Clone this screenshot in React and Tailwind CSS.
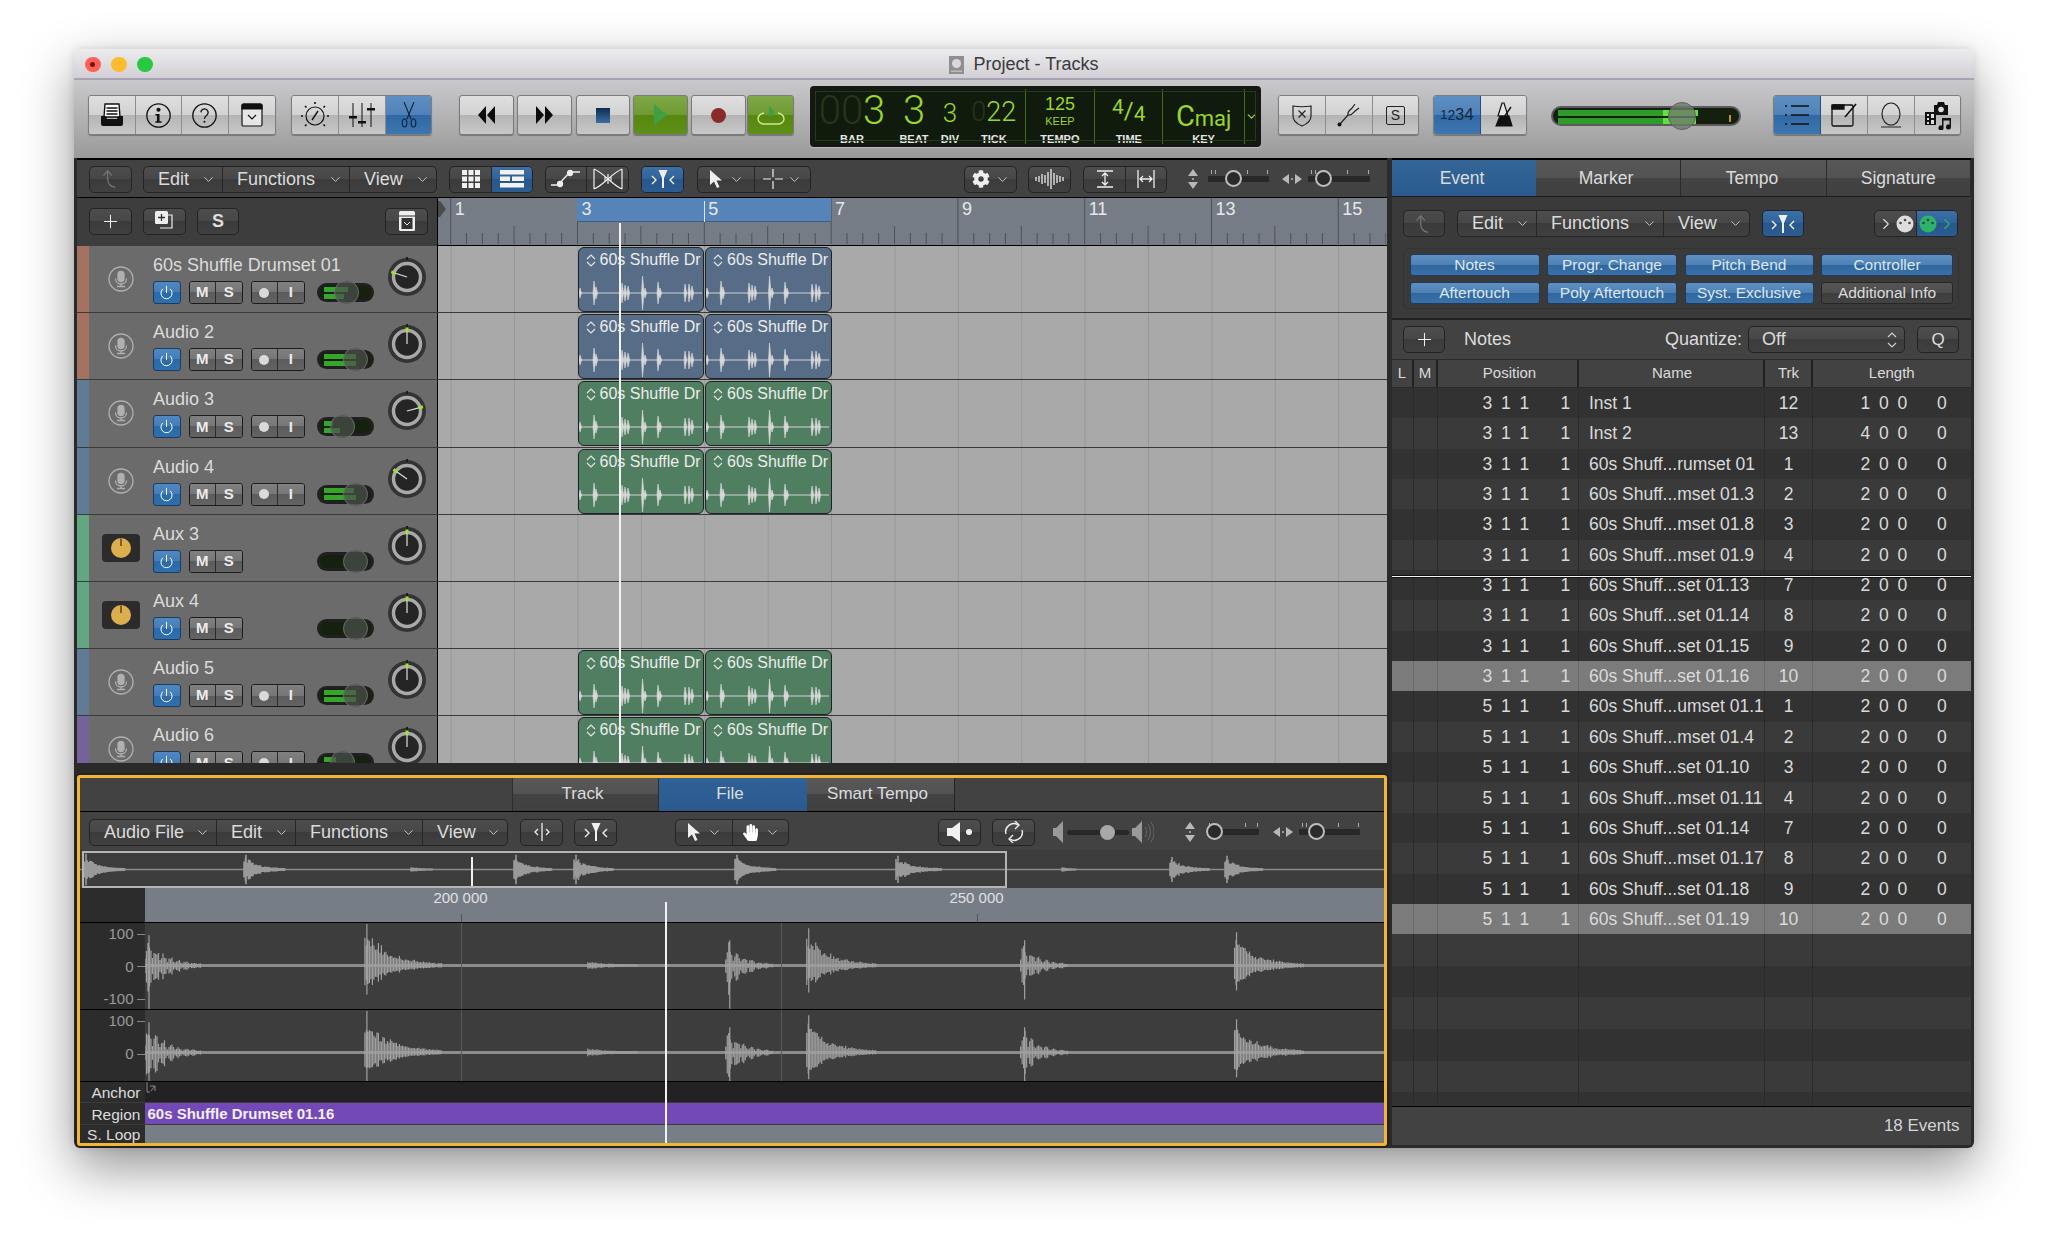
import React from 'react';
import { ChevronDown, Plus, Power } from 'lucide-react';
import { FaCog, FaHandPaper } from 'react-icons/fa';

const lightBtn = 'flex h-full items-center justify-center border-r border-[#8d8d8d] last:border-r-0 bg-[linear-gradient(#dfdfdf,#d2d2d2_50%,#b4b4b4_50%,#c8c8c8)]';
const blueBtn = 'flex h-full items-center justify-center border-r border-[#234f7d] last:border-r-0 bg-[linear-gradient(#5f8fc2,#4f82b8_50%,#2f68a4_50%,#3d76b0)]';
const darkSeg = 'flex h-[27px] overflow-hidden rounded-[5px] border border-[#232323] bg-[linear-gradient(#4d4d4d,#474747_50%,#3b3b3b_50%,#404040)] text-[#dcdcdc]';
const darkCell = 'flex h-full items-center justify-center border-r border-[#262626] last:border-r-0';
const activeCell = 'flex h-full items-center justify-center border-r border-[#262626] last:border-r-0 bg-[linear-gradient(#3d70a8,#2f6299_50%,#28578d_50%,#2b5c92)]';

function rng(seed) {
  let s = seed;
  return () => (s = (s * 16807) % 2147483647) / 2147483647;
}

function burst(x0, len, up, down, cy, seed, osc) {
  const r = rng(seed);
  let d = '';
  for (let i = 0; i < len; i += 1.5) {
    const env = Math.exp((-3.2 * i) / len);
    const wob = osc ? 0.3 + 0.7 * Math.abs(Math.sin(i * osc)) : 0.75 + 0.25 * r();
    const k = env * wob * (0.55 + 0.45 * r());
    d += `M${(x0 + i).toFixed(1)} ${(cy - up * k - 1).toFixed(1)}V${(cy + down * k + 1).toFixed(1)}`;
  }
  // the attack of each hit sticks out past the rest
  if (up > 10) {
    const sx = x0 + (osc ? 4 : 2);
    d += `M${sx} ${(cy - up * (osc ? 0.85 : 1.05)).toFixed(1)}V${(cy + down * (osc ? 1.15 : 1.05)).toFixed(1)}`;
  }
  return d;
}

const overviewBursts = [[4, 42, 15], [164, 42, 14], [331, 22, 2], [434, 38, 14], [494, 40, 14], [655, 42, 14], [816, 46, 13], [982, 14, 2], [1090, 40, 12], [1145, 38, 13]];
const bigBursts = [[0, 56, 36, 42, 0.42], [220, 78, 40, 28, 0], [443, 50, 4, 4, 0], [581, 48, 30, 38, 0.42], [662, 70, 36, 26, 0], [876, 48, 30, 30, 0.42], [1090, 70, 32, 24, 0]];

function Overview() {
  return (
    <svg className="absolute inset-0 h-full w-full" viewBox="0 0 1304 38" preserveAspectRatio="none">
      <path d="M0 19.5H1304" stroke="#8a8a8a" strokeWidth="1.5" />
      {overviewBursts.map(([x, l, a], i) => (
        <path key={i} d={burst(x, l, a, a, 19.5, 77 + i, 0)} stroke="#999" strokeWidth="1.6" fill="none" />
      ))}
    </svg>
  );
}

function BigWave({ cy, seed, h }) {
  return (
    <svg className="absolute inset-0 h-full w-full" viewBox={`0 0 1240 ${h}`} preserveAspectRatio="none">
      <path d={`M0 ${cy}H1240`} stroke="#8c8c8c" strokeWidth="3" />
      {bigBursts.map(([x, l, u, dn, o], i) => (
        <path key={i} d={burst(x, l, u, dn, cy, seed + i * 13, o)} stroke="#a0a0a0" strokeWidth="1.2" fill="none" />
      ))}
    </svg>
  );
}

function RegionWave() {
  const spikes = [[1, 5], [15, 12], [17, 6], [43, 10], [46, 8], [49, 7], [63.5, 17], [66, 5], [79, 11], [81, 5], [106, 9], [110, 9], [113, 7]];
  return (
    <svg width="125" height="40" viewBox="0 0 125 40" className="mt-[1px]">
      <path d="M0 20H123" stroke="#d4d4d4" strokeWidth="1" />
      {spikes.map(([x, a], i) => (
        <path key={i} d={`M${x} ${20 - a}L${x + 1.6} 20L${x} ${20 + a}L${x - 1} 20Z`} fill="#d8d8d8" stroke="#d8d8d8" strokeWidth="0.6" />
      ))}
    </svg>
  );
}

function Diamond() {
  return (
    <svg width="10" height="13" viewBox="0 0 10 13" fill="none" stroke="#e4e4e4" strokeWidth="1.2">
      <path d="M1 5L5 1L9 5M1 8L5 12L9 8" />
    </svg>
  );
}

function Region({ color }) {
  return (
    <div className={`h-[65px] w-[126.5px] shrink-0 overflow-hidden rounded-[6px] border border-[#1d2426] ${color}`}>
      <div className="flex h-[24px] items-center gap-[4px] pl-[7px] text-[16px] leading-none whitespace-nowrap text-[#ececec]">
        <Diamond />
        <span>60s Shuffle Dr</span>
      </div>
      <RegionWave />
    </div>
  );
}

function Mic() {
  return (
    <svg width="26" height="26" viewBox="0 0 26 26" fill="none" stroke="#b0b0b0" strokeWidth="1.3">
      <circle cx="13" cy="13" r="12" />
      <rect x="10" y="5.5" width="6" height="10" rx="3" fill="#b0b0b0" />
      <path d="M7.5 12.5c0 3.5 2.5 5.5 5.5 5.5s5.5-2 5.5-5.5M13 18v2.5M9 20.5h8" />
    </svg>
  );
}

function AuxKnob() {
  return (
    <div className="flex h-[28px] w-[38px] items-center justify-center rounded-[4px] bg-[#2b2b2b]">
      <svg width="22" height="22" viewBox="0 0 22 22">
        <circle cx="11" cy="11" r="10" fill="#dcae4e" />
        <path d="M11 1.5V9" stroke="#3a2c10" strokeWidth="1.2" />
      </svg>
    </div>
  );
}

function Knob({ angle }) {
  return (
    <svg width="40" height="40" viewBox="0 0 40 40">
      <circle cx="20" cy="20" r="19" fill="#333" />
      <path d="M20 0V3" stroke="#1c1c1c" strokeWidth="2" />
      <circle cx="20" cy="20" r="13.5" fill="#252525" stroke="#a9a9a9" strokeWidth="3.4" />
      <g transform={`rotate(${angle} 20 20)`}>
        <path d="M20 20V7" stroke="#e0e0e0" strokeWidth="1.2" />
        <path d="M20 3.5V7.5" stroke="#9be822" strokeWidth="3" />
      </g>
    </svg>
  );
}

function Fader({ pos, top, bot }) {
  return (
    <div className="relative ml-[12.5px] h-[19px] w-[57px] rounded-full bg-[#202020] p-[3px]">
      <div className="flex h-full flex-col justify-center gap-[2px] rounded-full bg-[#15210f] pl-[4px]">
        {top > 0 && <div className="h-[5px] bg-[#35a52c]" style={{ width: top }} />}
        {bot > 0 && <div className="h-[5px] bg-[#35a52c]" style={{ width: bot }} />}
      </div>
      <div className="absolute top-[-3px] h-[25px] w-[25px] rounded-full border border-[#6c6c6c] bg-[#4d524d]/70" style={{ left: pos }} />
    </div>
  );
}

const smallBtn = 'flex h-full items-center justify-center text-[15px] font-bold text-[#ececec] border-r border-[#2c2c2c] last:border-r-0 bg-[linear-gradient(#808080,#767676_50%,#5c5c5c_50%,#636363)]';

function TrackRow({ t }) {
  return (
    <div className="flex h-[67.2px] shrink-0 border-b border-[#3a3a3a]">
      <div className={`w-[12px] shrink-0 ${t.color}`} />
      <div className="flex w-[349px] shrink-0 border-r border-black bg-[#6b6b6b]">
        <div className="flex w-[64px] shrink-0 items-center justify-center">
          {t.aux ? <AuxKnob /> : <Mic />}
        </div>
        <div className="w-[221px] shrink-0 pt-[9px]">
          <div className="h-[21px] text-[18px] leading-[21px] text-[#dcdcdc]">{t.name}</div>
          <div className="mt-[5px] flex h-[23px] items-center">
            <div className="flex h-[23px] w-[27.5px] items-center justify-center rounded-[3px] border border-[#1d3c5c] bg-[linear-gradient(#4f88c2,#437cb6_50%,#2a6aa8_50%,#2f6fad)]">
              <Power size={15} color="#fff" strokeWidth={1.6} />
            </div>
            <div className="ml-[8px] flex h-[23px] w-[54px] overflow-hidden rounded-[3px] border border-[#1c1c1c]">
              <div className={`${smallBtn} w-[26.5px]`}>M</div>
              <div className={`${smallBtn} flex-1`}>S</div>
            </div>
            {t.aux ? (
              <div className="w-[62px]" />
            ) : (
              <div className="ml-[8px] flex h-[23px] w-[54px] overflow-hidden rounded-[3px] border border-[#1c1c1c]">
                <div className={`${smallBtn} w-[26.5px]`}><span className="h-[10px] w-[10px] rounded-full bg-[#dadada]" /></div>
                <div className={`${smallBtn} flex-1`}>I</div>
              </div>
            )}
            <Fader pos={t.pos} top={t.top} bot={t.bot} />
          </div>
        </div>
        <div className="ml-[13px] mt-[11px] h-[40px] w-[40px] shrink-0">
          <Knob angle={t.pan} />
        </div>
      </div>
      <div className="flex flex-1 gap-[1px] bg-[#a9a9a9] bg-[linear-gradient(to_right,#979797_1px,transparent_1px)] bg-[size:63.4px_100%] bg-[position:12.7px_0] pl-[139.5px] pt-[1px]">
        {t.clip && <Region color={t.clip} />}
        {t.clip && <Region color={t.clip} />}
      </div>
    </div>
  );
}

const blue = 'bg-[#566c87]';
const green = 'bg-[#4f7f60]';
const tracks = [
  { name: '60s Shuffle Drumset 01', color: 'bg-[#a57161]', clip: blue, pos: 17, top: 24, bot: 20, pan: -72 },
  { name: 'Audio 2', color: 'bg-[#a57161]', clip: blue, pos: 26, top: 32, bot: 32, pan: 0 },
  { name: 'Audio 3', color: 'bg-[#5f7b96]', clip: green, pos: 13, top: 9, bot: 16, pan: 75 },
  { name: 'Audio 4', color: 'bg-[#5f7b96]', clip: green, pos: 26, top: 30, bot: 32, pan: -55 },
  { name: 'Aux 3', color: 'bg-[#62a682]', aux: true, pos: 26, top: 0, bot: 0, pan: 0 },
  { name: 'Aux 4', color: 'bg-[#62a682]', aux: true, pos: 26, top: 0, bot: 0, pan: 0 },
  { name: 'Audio 5', color: 'bg-[#5f7b96]', clip: green, pos: 26, top: 32, bot: 32, pan: 0 },
  { name: 'Audio 6', color: 'bg-[#75629a]', clip: green, pos: 13, top: 12, bot: 14, pan: 0 },
];

const ev = (p, name, trk, len = 2, sel = false) => ({ p, name, trk, len, sel });
const events = [
  ev(3, 'Inst 1', 12, 1), ev(3, 'Inst 2', 13, 4), ev(3, '60s Shuff...rumset 01', 1), ev(3, '60s Shuff...mset 01.3', 2),
  ev(3, '60s Shuff...mset 01.8', 3), ev(3, '60s Shuff...mset 01.9', 4), ev(3, '60s Shuff...set 01.13', 7), ev(3, '60s Shuff...set 01.14', 8),
  ev(3, '60s Shuff...set 01.15', 9), ev(3, '60s Shuff...set 01.16', 10, 2, true), ev(5, '60s Shuff...umset 01.1', 1), ev(5, '60s Shuff...mset 01.4', 2),
  ev(5, '60s Shuff...set 01.10', 3), ev(5, '60s Shuff...mset 01.11', 4), ev(5, '60s Shuff...set 01.14', 7), ev(5, '60s Shuff...mset 01.17', 8),
  ev(5, '60s Shuff...set 01.18', 9), ev(5, '60s Shuff...set 01.19', 10, 2, true),
];

const colGrid = 'grid grid-cols-[22px_24px_141px_186px_48px_157.5px]';

function Num({ v, className = '' }) {
  return <span className={`w-[18.5px] text-center ${className}`}>{v}</span>;
}

function EventRow({ e, i }) {
  const bg = e.sel ? 'bg-[#7b7b7b]' : i % 2 ? 'bg-[#3a3a3a]' : 'bg-[#323232]';
  const cell = `h-full flex items-center border-r ${e.sel ? 'border-[#6a6a6a]' : 'border-[#2a2a2a]'}`;
  return (
    <div className={`${colGrid} h-[30.35px] text-[17.5px] text-[#dadada] ${bg}`}>
      <div className={cell} />
      <div className={cell} />
      <div className={`${cell} pl-[40px]`}>
        <Num v={e.p} /><Num v={1} /><Num v={1} /><Num v={1} className="ml-[22.5px]" />
      </div>
      <div className={`${cell} pl-[10px] whitespace-nowrap`}>{e.name}</div>
      <div className={`${cell} justify-center`}>{e.trk}</div>
      <div className="flex h-full items-center pl-[43px]">
        <Num v={e.len} /><Num v={0} /><Num v={0} /><Num v={0} className="ml-[21px]" />
      </div>
    </div>
  );
}

function EmptyRow({ i }) {
  const cell = 'h-full border-r border-[#2a2a2a]';
  return (
    <div className={`${colGrid} h-[31.6px] ${i % 2 ? 'bg-[#323232]' : 'bg-[#3a3a3a]'}`}>
      <div className={cell} /><div className={cell} /><div className={cell} /><div className={cell} /><div className={cell} /><div />
    </div>
  );
}

const Chev = () => <ChevronDown size={15} strokeWidth={1.5} color="#cfcfcf" />;

function MenuItem({ label, className }) {
  return (
    <div className={`flex h-full items-center justify-between border-r border-[#262626] pl-[14px] pr-[6px] text-[18px] last:border-r-0 ${className}`}>
      <span>{label}</span>
      <Chev />
    </div>
  );
}

const I = ({ w = 24, h = 24, vb = '0 0 24 24', children, ...p }) => (
  <svg width={w} height={h} viewBox={vb} fill="none" {...p}>{children}</svg>
);

const Catch = () => (
  <I w={28} h={22} vb="0 0 28 22" stroke="#f0f0f0" strokeWidth="1.4">
    <path d="M3 8l4 4-4 4M25 8l-4 4 4 4" />
    <path d="M9.5 2h9L15 10v10h-2V10z" fill="#f0f0f0" stroke="none" />
  </I>
);
const BackArrow = () => (
  <I w={20} h={24} stroke="#7b7b7b" strokeWidth="1.5">
    <path d="M3 8l5-6 5 6M8 2v10c0 6 3 9 9 10" />
  </I>
);
const GridIcon = () => (
  <I w={18} h={18} vb="0 0 18 18">
    {[0, 6.5, 13].flatMap((x) => [0, 6.5, 13].map((y) => <rect key={`${x}${y}`} x={x} y={y} width="5" height="5" fill="#f2f2f2" />))}
  </I>
);
const BricksIcon = () => (
  <I w={24} h={18} vb="0 0 24 18">
    <path d="M0 0h24v4.5H0zM0 6.5h10v4.5H0zM12 6.5h12v4.5H12zM0 13h24v4.5H0z" fill="#f2f2f2" />
  </I>
);
const Auto = () => (
  <I w={30} h={20} vb="0 0 30 20" stroke="#eee" strokeWidth="1.3">
    <path d="M0 16h7l12-13h10" />
    <circle cx="9" cy="15" r="2.5" fill="#eee" /><circle cx="19" cy="4" r="2.5" fill="#eee" />
  </I>
);
const FlexIcon = () => (
  <I w={30} h={22} vb="0 0 30 22" stroke="#eee" strokeWidth="1.2">
    <path d="M1 1c10 4 18 16 28 20M1 21C11 17 19 5 29 1M1 1v20M29 1v20" />
    <path d="M12 9v4M15 6v10M18 9v4" />
  </I>
);
const Pointer = () => (
  <svg width="14" height="20" viewBox="0 0 14 20"><path d="M1 1v15l4-3.5 3 6.5 2.5-1-3-6.5H13z" fill="#f0f0f0" /></svg>
);
const Cross = () => (
  <I w={20} h={20} vb="0 0 20 20" stroke="#eee" strokeWidth="1.2"><path d="M0 10h8M12 10h8M10 0v8M10 12v8" /></I>
);
const WaveBtn = () => (
  <I w={30} h={20} vb="0 0 30 20" stroke="#eee" strokeWidth="1.3">
    <path d="M1 8v4M4 7v6M7 5v10M10 6v8M13 3v14M16 0v20M19 4v12M22 6v8M25 7v6M28 8v4" />
  </I>
);
const VFit = () => (
  <I w={20} h={18} vb="0 0 20 18" stroke="#eee" strokeWidth="1.3"><path d="M2 1h16M2 17h16M10 3v12M7 6l3-3 3 3M7 12l3 3 3-3" /></I>
);
const HFit = () => (
  <I w={20} h={18} vb="0 0 20 18" stroke="#eee" strokeWidth="1.3"><path d="M2 0v18M18 0v18M4 9h12M7 6L4 9l3 3M13 6l3 3-3 3" /></I>
);
const UpDown = () => (
  <svg width="10" height="20" viewBox="0 0 10 20" fill="#b8b8b8"><path d="M5 0l5 7H0zM5 20l5-7H0z" /><circle cx="5" cy="10" r="1" /></svg>
);
const LeftRight = () => (
  <svg width="20" height="10" viewBox="0 0 20 10" fill="#b8b8b8"><path d="M0 5l7-5v10zM20 5l-7-5v10z" /><circle cx="10" cy="5" r="1" /></svg>
);

function ZoomTrack({ className, knob }) {
  return (
    <div className={`relative h-[6px] rounded-[1px] bg-[#282828] ${className}`}>
      <div className="absolute top-[-6px] left-[3px] h-[4px] w-[1px] bg-[#aaa]" />
      <div className="absolute top-[-6px] left-[7px] h-[4px] w-[1px] bg-[#aaa]" />
      <div className="absolute top-[-6px] left-[39px] h-[4px] w-[1px] bg-[#aaa]" />
      <div className="absolute top-[-6px] right-[1px] h-[4px] w-[1px] bg-[#aaa]" />
      <div className={`absolute top-[-6px] h-[17px] w-[17px] rounded-full border-[2.5px] border-[#bdbdbd] bg-[#2a2a2a] ${knob}`} />
    </div>
  );
}

function Ruler() {
  const ticks = [];
  for (let i = -1; i < 60; i++) {
    const x = 12.7 + i * 15.85;
    const bar = i % 8 === 0;
    const beat = i % 4 === 0;
    ticks.push(<path key={i} d={`M${x} ${bar ? 0 : beat ? 28 : 35}V46`} stroke="#4c525a" strokeWidth="1" />);
  }
  const bars = [1, 3, 5, 7, 9, 11, 13, 15];
  return (
    <div className="relative h-[48px] flex-1 border-b border-black bg-[#757c86]">
      <svg className="absolute inset-0 h-[46px] w-[948px]" viewBox="0 0 948 46">{ticks}</svg>
      <div className="absolute top-0 left-[139px] h-[24px] w-[254px] border-b border-[#3c5f86] bg-[#5683b8]" />
      <div className="absolute top-[3px] left-[266px] h-[21px] w-[1px] bg-[#dfe7f0]" />
      <div className="relative flex pl-[12.7px] pt-[1px] text-[18px] leading-[20px] text-[#e8e8e8]">
        {bars.map((b) => (
          <div key={b} className="w-[126.8px] shrink-0 pl-[4px]">{b}</div>
        ))}
      </div>
      <svg className="absolute top-[3px] left-0" width="8" height="16" viewBox="0 0 8 16"><path d="M0 0h2l6 8-6 8H0z" fill="#4b4b4b" /></svg>
    </div>
  );
}

function Lcd() {
  const lime = 'text-[#9ad62a]';
  const label = 'h-[13px] text-center text-[11px] leading-[13px] font-bold text-[#e6e6e6]';
  const num = "font-['Roboto',sans-serif] font-light";
  return (
    <div className="relative ml-[16px] mt-[2px] flex h-[61px] w-[451px] rounded-[4px] border-[3px] border-[#161616] bg-[#111b0d] shadow-[0_1px_1px_rgba(255,255,255,0.3)]">
      <div className="pointer-events-none absolute inset-x-[2px] top-[2px] bottom-[3px] border border-[#26391a]" />
      <div className="flex w-[213px] border-r border-[#446a1c] pt-[1px]">
        <div className="w-[78px]">
          <div className={`${num} flex h-[43px] items-center justify-center text-[40px] leading-none ${lime}`}>
            <span className="text-[#26361b]">00</span>3
          </div>
          <div className={label}>BAR</div>
        </div>
        <div className="w-[46px]">
          <div className={`${num} flex h-[43px] items-center justify-center text-[40px] leading-none ${lime}`}>3</div>
          <div className={label}>BEAT</div>
        </div>
        <div className="w-[26px]">
          <div className={`${num} flex h-[43px] items-center justify-center pt-[3px] text-[26px] leading-none ${lime}`}>3</div>
          <div className={label}>DIV</div>
        </div>
        <div className="flex-1">
          <div className={`${num} flex h-[43px] items-center justify-center pt-[3px] text-[27px] leading-none ${lime}`}>
            <span className="text-[#26361b]">0</span>22
          </div>
          <div className={label}>TICK</div>
        </div>
      </div>
      <div className="w-[70px] border-r border-[#446a1c] pt-[1px]">
        <div className={`flex h-[43px] flex-col items-center justify-center ${lime}`}>
          <div className="text-[18px] leading-[20px] font-medium">125</div>
          <div className="text-[11px] leading-[14px] font-medium">KEEP</div>
        </div>
        <div className={label}>TEMPO</div>
      </div>
      <div className="w-[68px] border-r border-[#446a1c] pt-[1px]">
        <div className={`${num} flex h-[43px] items-center justify-center text-[21px] leading-none font-normal ${lime}`}>
          <span className="relative top-[-4px]">4</span>
          <span className="text-[24px]">/</span>
          <span className="relative top-[3px]">4</span>
        </div>
        <div className={label}>TIME</div>
      </div>
      <div className="w-[82px] border-r border-[#446a1c] pt-[1px]">
        <div className={`${num} flex h-[43px] items-end justify-center pb-[3px] text-[22px] leading-none font-normal ${lime}`}>
          <span className="text-[29px] leading-[28px]">C</span>maj
        </div>
        <div className={label}>KEY</div>
      </div>
      <div className="flex flex-1 items-center justify-center">
        <ChevronDown size={13} strokeWidth={2.4} color="#9ad62a" />
      </div>
    </div>
  );
}

function MainToolbar() {
  const ic = 'w-[47px]';
  const tp = 'rounded-[3px] border border-[#7a7a7a] flex items-center justify-center shadow-[0_1px_1px_rgba(0,0,0,0.3)]';
  const light = 'bg-[linear-gradient(#dfdfdf,#d2d2d2_50%,#b4b4b4_50%,#c8c8c8)]';
  const grp = 'flex h-[40px] overflow-hidden rounded-[3px] border border-[#7d7d7d] shadow-[0_1px_1px_rgba(0,0,0,0.3)]';
  return (
    <div className="flex h-[78px] shrink-0 items-center bg-[linear-gradient(#c9c9cc,#9a9a9a)] pb-[8px] pl-[14px]">
      <div className={`${grp} w-[188px]`}>
        <div className={`${lightBtn} ${ic}`}>
          <I w={24} h={24}>
            <path d="M5 1h14l1 13H4z" fill="#fff" stroke="#111" strokeWidth="1.4" />
            <path d="M6.5 5h11M6.5 8h11M6.5 11h11" stroke="#111" strokeWidth="1.6" />
            <path d="M1 13h5l1 3h10l1-3h5v8a2 2 0 0 1-2 2H3a2 2 0 0 1-2-2z" fill="#111" />
          </I>
        </div>
        <div className={`${lightBtn} ${ic}`}>
          <I w={25} h={25} stroke="#111" strokeWidth="1.3">
            <circle cx="12" cy="12" r="11.2" />
            <circle cx="12" cy="6.5" r="2" fill="#111" stroke="none" />
            <path d="M9 10.5h4v7h2v1.5H9v-1.5h1.5V12H9z" fill="#111" stroke="none" />
          </I>
        </div>
        <div className={`${lightBtn} ${ic}`}>
          <I w={25} h={25} stroke="#111" strokeWidth="1.3">
            <circle cx="12" cy="12" r="11.2" />
            <path d="M8.5 9a3.5 3.5 0 1 1 5.5 3c-1.3.9-2 1.7-2 3.2" />
            <circle cx="12" cy="18" r="1" fill="#111" stroke="none" />
          </I>
        </div>
        <div className={`${lightBtn} ${ic}`}>
          <I w={24} h={24} stroke="#111" strokeWidth="1.2">
            <rect x="2" y="1" width="20" height="22" rx="1.5" fill="#e6e6e6" />
            <path d="M2 2.5a1.5 1.5 0 0 1 1.5-1.5h17A1.5 1.5 0 0 1 22 2.5V6H2z" fill="#111" />
            <path d="M8 12l4 4 4-4" />
          </I>
        </div>
      </div>
      <div className={`${grp} ml-[15px] w-[141px]`}>
        <div className={`${lightBtn} ${ic}`}>
          <I w={28} h={26} vb="0 0 28 26" stroke="#111" strokeWidth="1.2">
            <circle cx="14" cy="14" r="9" />
            <path d="M11 18l6-9" strokeWidth="1.4" />
            <path d="M14 0v2M4 4l1.5 1.5M24 4l-1.5 1.5M0 14h2M26 14h2M4 24l1.5-1.5M24 24l-1.5-1.5" strokeWidth="1.6" />
          </I>
        </div>
        <div className={`${lightBtn} ${ic}`}>
          <I w={28} h={24} vb="0 0 28 24" stroke="#111" strokeWidth="1">
            <path d="M5 0v24M14 0v24M23 0v24" />
            <path d="M1 13h8v2.5H1zM10 18h8v2.5h-8zM19 5h8v2.5h-8z" fill="#111" stroke="none" />
          </I>
        </div>
        <div className={`${blueBtn} flex-1`}>
          <I w={18} h={26} vb="0 0 18 26" stroke="#0e2744" strokeWidth="1.2">
            <path d="M4 0l7 17M14 0L7 17" />
            <ellipse cx="4.5" cy="21" rx="2.3" ry="4" />
            <ellipse cx="13.5" cy="21" rx="2.3" ry="4" />
          </I>
        </div>
      </div>
      <div className={`ml-[27px] h-[40px] w-[55px] ${tp} ${light}`}>
        <svg width="17" height="18" viewBox="0 0 17 18"><path d="M8 0v18L0 9zM17 0v18L9 9z" fill="#0c0c0c" /></svg>
      </div>
      <div className={`ml-[3px] h-[40px] w-[55px] ${tp} ${light}`}>
        <svg width="17" height="18" viewBox="0 0 17 18"><path d="M0 0v18l8-9zM9 0v18l8-9z" fill="#0c0c0c" /></svg>
      </div>
      <div className={`ml-[4px] h-[40px] w-[54px] ${tp} ${light}`}>
        <div className="h-[15px] w-[14px] bg-[linear-gradient(#0f2b4e,#3b6fa6)]" />
      </div>
      <div className={`ml-[3px] h-[40px] w-[55px] ${tp} border-[#4f6b1c] bg-[linear-gradient(#7fa847,#6f9a32_50%,#56870f_50%,#5e8f16)]`}>
        <svg width="13" height="22" viewBox="0 0 13 22"><path d="M0 0l13 11L0 22z" fill="#3f9f42" /></svg>
      </div>
      <div className={`ml-[3px] h-[40px] w-[55px] ${tp} ${light}`}>
        <div className="h-[15px] w-[15px] rounded-full bg-[#8a2b2b]" />
      </div>
      <div className={`ml-[1px] h-[40px] w-[47px] ${tp} border-[#4f6b1c] bg-[linear-gradient(#7fa847,#6f9a32_50%,#56870f_50%,#5e8f16)]`}>
        <I w={30} h={22} vb="0 0 30 22" stroke="#cdec86" strokeWidth="1.4">
          <path d="M8 9c-4 1-6 3.5-6 6 0 3 3 5 6 5h14c3 0 6-2 6-5 0-2.5-2-5-6-6" />
          <path d="M13 2l6 6-6 6z" fill="#3f9f42" stroke="none" />
        </I>
      </div>
      <Lcd />
      <div className={`${grp} ml-[17px] w-[141px]`}>
        <div className={`${lightBtn} ${ic}`}>
          <I w={22} h={24} vb="0 0 22 24" stroke="#222" strokeWidth="1.2">
            <path d="M2 3c6 1 12 1 18 0v10c0 5-4 8-9 10-5-2-9-5-9-10z" />
            <path d="M7.5 7.5l7 7M14.5 7.5l-7 7" />
          </I>
        </div>
        <div className={`${lightBtn} ${ic}`}>
          <I w={26} h={26} vb="0 0 26 26" stroke="#222" strokeWidth="1.2">
            <path d="M4 22l8-9M12 13c-1-3 2-5 4-7l3-4M12 13c3 1 5-2 7-4l4-3" />
            <circle cx="3.5" cy="22.5" r="2" fill="#111" stroke="none" />
          </I>
        </div>
        <div className={`${lightBtn} flex-1`}>
          <div className="flex h-[19px] w-[19px] items-center justify-center rounded-[2px] border border-[#222] text-[14px] text-[#222]">S</div>
        </div>
      </div>
      <div className={`${grp} ml-[14px] w-[94px]`}>
        <div className={`${blueBtn} ${ic} text-[16px] text-[#12263c]`}>
          <span className="text-[13px]">1</span><span className="text-[14px]">2</span><span>3</span><span className="text-[17px]">4</span>
        </div>
        <div className={`${lightBtn} flex-1`}>
          <I w={22} h={26} vb="0 0 22 26" stroke="#111" strokeWidth="1.2">
            <path d="M9 1h2l4 13H5z" fill="#e6e6e6" />
            <path d="M3 24L7 14h9l3 10z" fill="#111" />
            <path d="M9 18L18 5" strokeWidth="1.4" />
          </I>
        </div>
      </div>
      <div className="relative ml-[24px] mt-[2px] h-[20px] w-[190px] rounded-full border-[2px] border-[#5b5b5b] bg-[#141f10] pl-[5px]">
        <div className="mt-[2px] flex h-[6px] w-[140px]"><div className="w-[105px] bg-[#2f9b28]" /><div className="flex-1 bg-[#5fe33a]" /></div>
        <div className="mt-[2px] flex h-[6px] w-[138px]"><div className="w-[105px] bg-[#2f9b28]" /><div className="flex-1 bg-[#5fe33a]" /></div>
        <div className="absolute top-[7px] right-[8px] h-[7px] w-[2px] bg-[#c98a2a]" />
        <div className="absolute top-[-6px] left-[115px] h-[28px] w-[28px] rounded-full border border-[#5f5f5f] bg-[#6d7a6d]/80" />
      </div>
      <div className={`${grp} ml-[32px] w-[188px]`}>
        <div className={`${blueBtn} ${ic}`}>
          <I w={24} h={22} vb="0 0 24 22" stroke="#111" strokeWidth="1.5">
            <path d="M0 2h2M6 2h18M0 11h2M6 11h18M0 20h2M6 20h18" />
          </I>
        </div>
        <div className={`${lightBtn} ${ic}`}>
          <I w={26} h={26} vb="0 0 26 26" stroke="#111" strokeWidth="1.3">
            <rect x="1" y="3" width="21" height="21" rx="1.5" />
            <path d="M1 3h12v4H1z" fill="#111" />
            <path d="M14 15L25 2" strokeWidth="1.6" />
          </I>
        </div>
        <div className={`${lightBtn} ${ic}`}>
          <I w={24} h={26} vb="0 0 24 26" stroke="#222" strokeWidth="1.2">
            <ellipse cx="12" cy="12" rx="9" ry="11" />
            <path d="M2 25h20" />
          </I>
        </div>
        <div className={`${lightBtn} flex-1`}>
          <I w={30} h={30} vb="0 0 30 30" fill="#111">
            <path d="M11 5h3l1-3h6l1 3h3v10H11z" />
            <circle cx="18" cy="9.5" r="2.8" fill="#ddd" />
            <path d="M2 12h11v13H2z" />
            <path d="M4 14h2v2H4zM4 18h2v2H4zM4 22h2v2H4zM8 14h3v4H8zM8 20h3v4H8z" fill="#ddd" />
            <path d="M19 18h9v9a2.5 2.5 0 1 1-1.5-2.3V20.500h-6v7.500a2.500 2.500 0 1 1-1.500-2.300z" />
          </I>
        </div>
      </div>
    </div>
  );
}

function TracksPanel() {
  return (
    <div className="relative flex h-[605px] shrink-0 flex-col overflow-hidden border-t-2 border-black">
      <div className="flex h-[37px] shrink-0 items-center bg-[#424242] pl-[12px] pt-[1px]">
        <div className={`${darkSeg} w-[43px] border-[#333] opacity-90`}><div className={`${darkCell} w-full`}><BackArrow /></div></div>
        <div className={`${darkSeg} ml-[11px] w-[294px]`}>
          <MenuItem label="Edit" className="w-[79px]" />
          <MenuItem label="Functions" className="w-[127px]" />
          <MenuItem label="View" className="flex-1" />
        </div>
        <div className={`${darkSeg} ml-[12px] w-[84px]`}>
          <div className={`${darkCell} w-[42px]`}><GridIcon /></div>
          <div className={`${activeCell} flex-1`}><BricksIcon /></div>
        </div>
        <div className={`${darkSeg} ml-[12px] w-[84px]`}>
          <div className={`${darkCell} w-[41px]`}><Auto /></div>
          <div className={`${darkCell} flex-1`}><FlexIcon /></div>
        </div>
        <div className={`${darkSeg} ml-[12px] w-[43px]`}><div className={`${activeCell} w-full`}><Catch /></div></div>
        <div className={`${darkSeg} ml-[13px] w-[114px]`}>
          <div className={`${darkCell} w-[57px] gap-[6px]`}><Pointer /><Chev /></div>
          <div className={`${darkCell} flex-1 gap-[4px]`}><Cross /><Chev /></div>
        </div>
        <div className={`${darkSeg} ml-[153px] w-[53px]`}>
          <div className={`${darkCell} w-full gap-[5px]`}><FaCog size={18} color="#eee" /><Chev /></div>
        </div>
        <div className={`${darkSeg} ml-[11px] w-[43px]`}><div className={`${darkCell} w-full`}><WaveBtn /></div></div>
        <div className={`${darkSeg} ml-[12px] w-[84px]`}>
          <div className={`${darkCell} w-[42px]`}><VFit /></div>
          <div className={`${darkCell} flex-1`}><HFit /></div>
        </div>
        <div className="ml-[21px]"><UpDown /></div>
        <ZoomTrack className="ml-[10px] w-[61px]" knob="left-[17px]" />
        <div className="ml-[13px]"><LeftRight /></div>
        <ZoomTrack className="ml-[6px] w-[62px]" knob="left-[7px]" />
      </div>
      <div className="flex shrink-0 border-t border-black">
        <div className="flex h-[48px] w-[361px] shrink-0 items-center border-r border-black bg-[#3d3d3d] pb-[2px] pl-[12px]">
          <div className={`${darkSeg} w-[43px] items-center justify-center`}><Plus size={21} strokeWidth={1.2} color="#eee" /></div>
          <div className={`${darkSeg} ml-[11px] w-[43px] items-center justify-center`}>
            <I w={24} h={22} vb="0 0 24 22">
              <path d="M7 5h12v13H7" stroke="#eee" strokeWidth="1.2" />
              <rect x="2" y="1" width="13" height="13" rx="1.5" fill="#eee" />
              <path d="M5 7.5h7M8.5 4v7" stroke="#333" strokeWidth="1.3" />
            </I>
          </div>
          <div className={`${darkSeg} ml-[11px] w-[42px] items-center justify-center text-[18px] font-bold`}>S</div>
          <div className={`${darkSeg} ml-[146px] w-[43px] items-center justify-center`}>
            <I w={18} h={22} vb="0 0 18 22">
              <rect x="1" y="1" width="16" height="20" rx="1.5" fill="#eee" />
              <path d="M1 6h16" stroke="#333" strokeWidth="1" />
              <rect x="3.5" y="8" width="11" height="11" fill="#333" />
              <path d="M6 12l3 3 3-3" stroke="#eee" strokeWidth="1" fill="none" />
            </I>
          </div>
        </div>
        <Ruler />
      </div>
      <div className="flex min-h-0 flex-1 flex-col overflow-hidden">
        {tracks.map((t) => <TrackRow key={t.name} t={t} />)}
      </div>
      <div className="absolute top-[63px] bottom-0 left-[541.5px] w-[2px] bg-[#f2f2f2]" />
    </div>
  );
}

const waveLabel = 'flex items-center justify-end gap-[3px] text-[15px] leading-[18px] text-[#9a9a9a]';

function ScaleLabel({ v }) {
  return (
    <div className={waveLabel}>
      <span>{v}</span>
      <span className="h-[1px] w-[8px] bg-[#888]" />
    </div>
  );
}

function FilePanel() {
  const sideLabel = 'flex w-[64.5px] shrink-0 items-center justify-end bg-[#2c2c2c] pr-[4px] pt-[2px] text-[15.5px] whitespace-nowrap text-[#dcdcdc]';
  return (
    <div className="relative mt-[12px] flex h-[371px] shrink-0 flex-col overflow-hidden rounded-[3px] border-[3px] border-[#f2b632] shadow-[0_0_0_2px_#222]">
      <div className="flex h-[34px] shrink-0 border-b border-black bg-[#424242] pl-[432px] text-[17px] text-[#dcdcdc]">
        <div className="flex w-[147px] items-center justify-center border-x border-[#2e2e2e] bg-[linear-gradient(#585858,#525252_50%,#434343_50%,#404040)] pr-[6px] pb-[2px]">Track</div>
        <div className="flex w-[148px] items-center justify-center bg-[linear-gradient(#2f6096,#2a5a90)] pr-[6px] pb-[2px]">File</div>
        <div className="flex w-[148px] items-center justify-center border-r border-[#222] bg-[linear-gradient(#585858,#525252_50%,#434343_50%,#404040)] pr-[6px] pb-[2px]">Smart Tempo</div>
      </div>
      <div className="flex h-[38px] shrink-0 items-center bg-[#424242] pl-[9px] pt-[2px]">
        <div className={`${darkSeg} w-[419px]`}>
          <MenuItem label="Audio File" className="w-[127px]" />
          <MenuItem label="Edit" className="w-[79px]" />
          <MenuItem label="Functions" className="w-[127px]" />
          <MenuItem label="View" className="flex-1" />
        </div>
        <div className={`${darkSeg} ml-[12px] w-[43px] items-center justify-center`}>
          <I w={20} h={18} vb="0 0 20 18" stroke="#eee" strokeWidth="1.3"><path d="M10 0v18M6 6L3 9l3 3M14 6l3 3-3 3" /></I>
        </div>
        <div className={`${darkSeg} ml-[11px] w-[43px] items-center justify-center`}><Catch /></div>
        <div className={`${darkSeg} ml-[58px] w-[114px]`}>
          <div className={`${darkCell} w-[57px] gap-[6px]`}><Pointer /><Chev /></div>
          <div className={`${darkCell} flex-1 gap-[6px]`}><FaHandPaper size={17} color="#fff" /><Chev /></div>
        </div>
        <div className={`${darkSeg} ml-[149px] w-[43px] items-center justify-center gap-[4px]`}>
          <svg width="15" height="20" viewBox="0 0 15 20" fill="#f0f0f0"><path d="M0 6h5l8-6v20l-8-6H0z" /></svg>
          <div className="h-[6px] w-[6px] rounded-full bg-[#f0f0f0]" />
        </div>
        <div className={`${darkSeg} ml-[11px] w-[43px] items-center justify-center`}>
          <I w={22} h={22} vb="0 0 22 22" stroke="#eee" strokeWidth="1.4">
            <path d="M3 13A8 8 0 0 1 15 4M19 9a8 8 0 0 1-12 9" />
            <path d="M12 0l4 4-4 4M10 14l-4 4 4 4" />
          </I>
        </div>
        <svg className="ml-[18px]" width="10" height="22" viewBox="0 0 10 22" fill="#9a9a9a"><path d="M0 7h3l7-7v22l-7-7H0z" /></svg>
        <div className="relative ml-[4px] h-[5px] w-[62px] rounded-full bg-[#282828]">
          <div className="absolute top-[-5px] left-[33px] h-[15px] w-[15px] rounded-full bg-[#a8a8a8]" />
        </div>
        <svg className="ml-[3px]" width="22" height="22" viewBox="0 0 22 22" fill="#9a9a9a"><path d="M0 7h3l7-7v22l-7-7H0z" /><path d="M13 6c2 3 2 7 0 10M16 3c3 5 3 11 0 16M19 1c4 6 4 14 0 20" stroke="#666" fill="none" /></svg>
        <div className="ml-[31px]"><UpDown /></div>
        <ZoomTrack className="ml-[11px] w-[53px]" knob="left-[0px]" />
        <div className="ml-[14px]"><LeftRight /></div>
        <ZoomTrack className="ml-[6px] w-[61px]" knob="left-[9px]" />
      </div>
      <div className="relative h-[38px] shrink-0 bg-[#3c3c3c]">
        <Overview />
        <div className="absolute top-[1px] left-[2px] h-[37px] w-[925px] border-2 border-[#b4b4b4]" />
        <div className="absolute top-[7px] left-[391px] h-[29px] w-[2px] bg-[#f0f0f0]" />
      </div>
      <div className="flex h-[35px] shrink-0 border-b border-black">
        <div className="w-[64.5px] shrink-0 bg-[#2c2c2c]" />
        <div className="relative flex flex-1 bg-[#767d87] text-[15px] leading-[20px] text-[#e0e0e0]">
          <div className="ml-[276px] w-[80px] text-center">200 000</div>
          <div className="ml-[436px] w-[80px] text-center">250 000</div>
          <div className="absolute bottom-0 left-[316px] h-[8px] w-[1px] bg-[#555]" />
          <div className="absolute bottom-0 left-[832px] h-[8px] w-[1px] bg-[#555]" />
        </div>
      </div>
      <div className="flex h-[87px] shrink-0 border-b border-black">
        <div className="flex w-[64.5px] shrink-0 flex-col justify-between bg-[#2c2c2c] pt-[2px] pb-[1px]">
          <ScaleLabel v="100" /><ScaleLabel v="0" /><ScaleLabel v="-100" />
        </div>
        <div className="relative flex-1 bg-[#3d3d3d]">
          <BigWave cy={43} seed={31} h={87} />
          <div className="absolute inset-y-0 left-[316px] w-[1px] bg-[#5a5a5a]" />
          <div className="absolute inset-y-0 left-[636px] w-[1px] bg-[#5a5a5a]" />
        </div>
      </div>
      <div className="flex h-[72px] shrink-0 border-b border-black">
        <div className="flex w-[64.5px] shrink-0 flex-col gap-[15px] bg-[#2c2c2c] pt-[2px]">
          <ScaleLabel v="100" /><ScaleLabel v="0" />
        </div>
        <div className="relative flex-1 overflow-hidden bg-[#3d3d3d]">
          <BigWave cy={43} seed={57} h={72} />
          <div className="absolute inset-y-0 left-[316px] w-[1px] bg-[#5a5a5a]" />
          <div className="absolute inset-y-0 left-[636px] w-[1px] bg-[#5a5a5a]" />
        </div>
      </div>
      <div className="flex h-[20px] shrink-0 bg-[#222]">
        <div className={sideLabel}>Anchor</div>
        <svg className="ml-[1px]" width="10" height="12" viewBox="0 0 10 12" fill="none" stroke="#8a8a8a" strokeWidth="1"><path d="M1 0v10h3M4 4h5v5M9 4L5 9" /></svg>
      </div>
      <div className="flex h-[22px] shrink-0 border-t border-[#3b3b3b] bg-[#7349b8]">
        <div className={sideLabel}>Region</div>
        <div className="flex items-center pl-[3px] pt-[1px] text-[15px] font-bold text-[#f4f0fa]">60s Shuffle Drumset 01.16</div>
      </div>
      <div className="flex h-[19px] shrink-0 border-t border-[#3b3b3b] bg-[#777e88]">
        <div className={sideLabel}>S. Loop</div>
      </div>
      <div className="absolute top-[124px] bottom-0 left-[584.5px] w-[2px] bg-[#f2f2f2]" />
    </div>
  );
}

function EventPanel() {
  const filterBlue = 'flex h-[22px] items-center justify-center rounded-[3px] border border-[#1d3d5e] text-[15.5px] text-[#dbe6f1] bg-[linear-gradient(#5f90c0,#4d80b4_50%,#2f669e_50%,#3a71a9)]';
  const tab = 'flex items-center justify-center border-r border-[#2a2a2a] bg-[linear-gradient(#585858,#525252_50%,#434343_50%,#404040)]';
  const rowsTop = ['Notes', 'Progr. Change', 'Pitch Bend', 'Controller'];
  const rowsBot = ['Aftertouch', 'Poly Aftertouch', 'Syst. Exclusive'];
  return (
    <div className="ml-[5px] flex h-[987px] w-[578.5px] shrink-0 flex-col border-t-2 border-black">
      <div className="grid h-[37px] shrink-0 grid-cols-[144px_145px_146px_1fr] border-b border-[#1c1c1c] text-[17.5px] text-[#dcdcdc]">
        <div className="flex items-center justify-center bg-[linear-gradient(#346596,#2a5b90)] pr-[4px]">Event</div>
        <div className={`${tab} pr-[4px]`}>Marker</div>
        <div className={`${tab} pr-[3px]`}>Tempo</div>
        <div className={tab}>Signature</div>
      </div>
      <div className="h-[123px] shrink-0 border-b-2 border-[#222] bg-[#3a3a3a] pl-[11px] pt-[14px]">
        <div className="flex h-[25px] items-center">
          <div className={`${darkSeg} h-[25px] w-[42px] items-center justify-center border-[#333] opacity-90`}><BackArrow /></div>
          <div className={`${darkSeg} ml-[12px] h-[25px] w-[293px]`}>
            <MenuItem label="Edit" className="w-[79px]" />
            <MenuItem label="Functions" className="w-[127px]" />
            <MenuItem label="View" className="flex-1" />
          </div>
          <div className={`${darkSeg} ml-[12px] h-[25px] w-[42px]`}><div className={`${activeCell} w-full`}><Catch /></div></div>
          <div className={`${darkSeg} ml-[70px] h-[25px] w-[84px]`}>
            <div className={`${darkCell} w-[42px] gap-[1px]`}>
              <ChevronDown size={18} className="-rotate-90" strokeWidth={1.5} color="#ddd" />
              <svg width="18" height="18" viewBox="0 0 18 18"><circle cx="9" cy="9" r="8.5" fill="#ddd" /><circle cx="4.5" cy="8" r="1.3" fill="#444" /><circle cx="9" cy="5" r="1.3" fill="#444" /><circle cx="13.5" cy="8" r="1.3" fill="#444" /></svg>
            </div>
            <div className={`${activeCell} flex-1 gap-[1px]`}>
              <svg width="18" height="18" viewBox="0 0 18 18"><circle cx="9" cy="9" r="8.5" fill="#2fb36a" /><circle cx="4.5" cy="8" r="1.3" fill="#144" /><circle cx="9" cy="5" r="1.3" fill="#144" /><circle cx="13.5" cy="8" r="1.3" fill="#144" /></svg>
              <ChevronDown size={18} className="-rotate-90" strokeWidth={1.5} color="#2fb36a" />
            </div>
          </div>
        </div>
        <div className="mt-[12px] grid h-[61px] w-[556px] grid-cols-[130px_130px_129px_132px] content-center gap-x-[7.5px] gap-y-[6px] rounded-[6px] border border-[#333] px-[5.5px]">
          {rowsTop.map((l) => <div key={l} className={filterBlue}>{l}</div>)}
          {rowsBot.map((l) => <div key={l} className={filterBlue}>{l}</div>)}
          <div className="flex h-[22px] items-center justify-center rounded-[3px] border border-[#262626] bg-[linear-gradient(#555,#4e4e4e_50%,#3e3e3e_50%,#424242)] text-[15.5px] text-[#dcdcdc]">Additional Info</div>
        </div>
      </div>
      <div className="flex h-[39px] shrink-0 items-center bg-[#424242] pl-[11px] text-[#dcdcdc]">
        <div className={`${darkSeg} w-[42px] items-center justify-center`}><Plus size={21} strokeWidth={1.2} color="#eee" /></div>
        <div className="ml-[19px] w-[200px] text-[18px]">Notes</div>
        <div className="w-[78px] text-right whitespace-nowrap text-[18px]">Quantize:</div>
        <div className={`${darkSeg} ml-[6px] w-[157px] items-center justify-between pl-[13px] pr-[6px] text-[18px]`}>
          <span>Off</span>
          <svg width="12" height="18" viewBox="0 0 12 18" fill="none" stroke="#ccc" strokeWidth="1.2"><path d="M2 6l4-4 4 4M2 12l4 4 4-4" /></svg>
        </div>
        <div className={`${darkSeg} ml-[12px] w-[42px] items-center justify-center text-[17px]`}>Q</div>
      </div>
      <div className={`${colGrid} h-[29px] shrink-0 border-y border-[#2a2a2a] bg-[#424242] text-[15px] text-[#dcdcdc]`}>
        <div className="flex items-center justify-center border-r-2 border-[#222]">L</div>
        <div className="flex items-center justify-center border-r-2 border-[#222]">M</div>
        <div className="flex items-center justify-center border-r-2 border-[#222] pl-[4px]">Position</div>
        <div className="flex items-center justify-center border-r-2 border-[#222] pl-[2px]">Name</div>
        <div className="flex items-center justify-center border-r-2 border-[#222] pl-[1px]">Trk</div>
        <div className="flex items-center justify-center">Length</div>
      </div>
      <div className="relative min-h-0 flex-1 overflow-hidden bg-[#323232]">
        {events.map((e, i) => <EventRow key={i} e={e} i={i} />)}
        {[0, 1, 2, 3, 4, 5].map((i) => <EmptyRow key={i} i={i} />)}
        <div className="absolute top-[187px] right-0 left-0 h-[3px] border-y border-[#111] bg-[#f5f5f5]" />
      </div>
      <div className="flex h-[39px] shrink-0 items-center justify-end border-t border-black bg-[#424242] pr-[11px] text-[17px] text-[#d4d4d4]">18 Events</div>
    </div>
  );
}

export default function App() {
  return (
    <div className="h-[1246px] w-[2048px] overflow-hidden bg-white pl-[74px] pt-[49px] font-['Liberation_Sans',Arial,sans-serif]">
      <div className="flex h-[1099px] w-[1900px] flex-col overflow-hidden rounded-[6px] shadow-[0_20px_52px_rgba(0,0,0,0.42),0_0_8px_rgba(0,0,0,0.12)]">
        <div className="grid h-[31px] shrink-0 grid-cols-[1fr_auto_1fr] items-center border-b-2 border-[#a5a3b4] bg-[linear-gradient(#ecebed,#d2d0d5)] pt-[2px]">
          <div className="flex gap-[10.5px] pl-[11px]">
            <div className="flex h-[15.5px] w-[15.5px] items-center justify-center rounded-full bg-[#ff5f57]"><span className="h-[5px] w-[5px] rounded-full bg-[#6a1710]" /></div>
            <div className="h-[15.5px] w-[15.5px] rounded-full bg-[#fdbc2e]" />
            <div className="h-[15.5px] w-[15.5px] rounded-full bg-[#28c840]" />
          </div>
          <div className="flex items-center gap-[9px] text-[18px] text-[#3a3a3a]">
            <svg width="15" height="18" viewBox="0 0 15 18"><rect width="15" height="18" fill="#8f8f8f" /><circle cx="7.5" cy="7.5" r="4.5" fill="#d8d8d8" /><rect x="2" y="14.5" width="11" height="1.5" fill="#bbb" /></svg>
            <span>Project - Tracks</span>
          </div>
          <div />
        </div>
        <MainToolbar />
        <div className="flex min-h-0 flex-1 bg-[#2a2a2a] pl-[3px]">
          <div className="flex w-[1310px] shrink-0 flex-col">
            <TracksPanel />
            <FilePanel />
          </div>
          <EventPanel />
        </div>
      </div>
    </div>
  );
}
